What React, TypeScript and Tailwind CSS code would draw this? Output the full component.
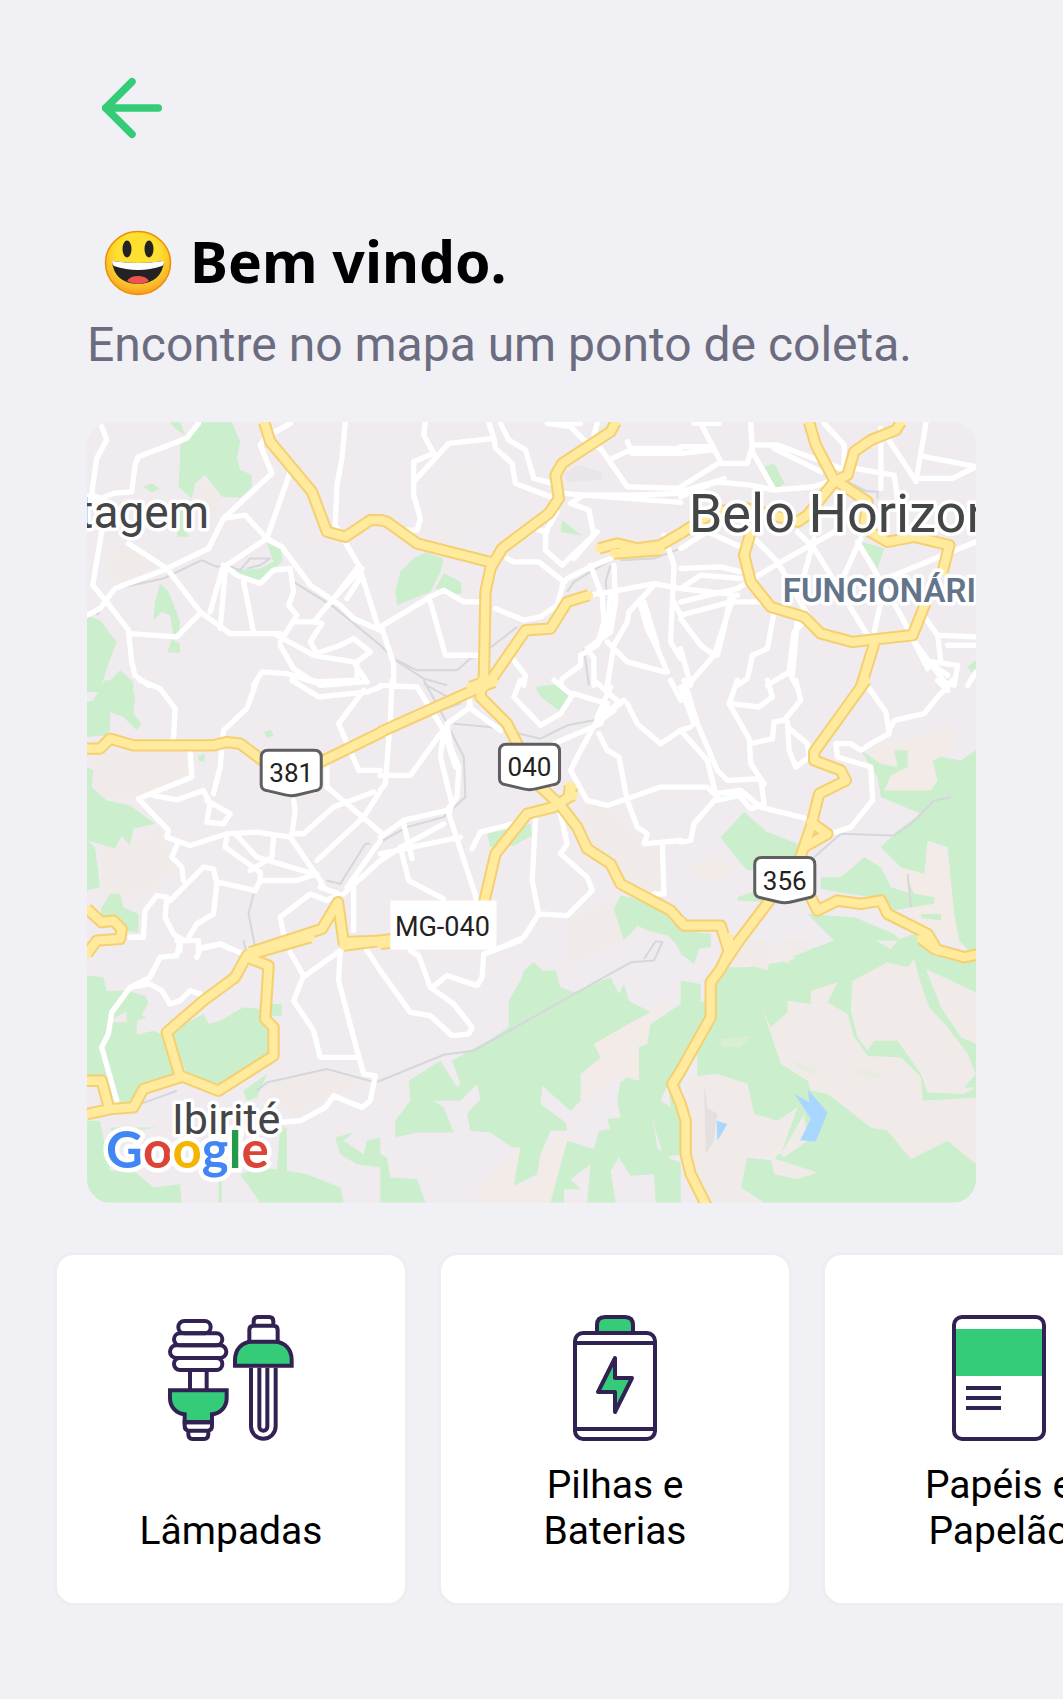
import { ArrowLeft } from "lucide-react";

type Shape = { fill: string; d: string };
type Tile = {
  x: number;
  y: number;
  land: Shape[];
  rails: string;
  streets: string;
  highways: string;
};

const GREEN = "#cbeecd";
const SAND = "#f0ebe9";
const CREAM = "#f2ebe7";
const WATER = "#a9d6ff";

// Each tile covers 300x265 map units; its paths are drawn on a grid three times as fine.
const tiles: Tile[] = [
  {
    x: -7,
    y: -7,
    land: [
      { fill: SAND, d: "M360 180 425 245 400 300 335 250ZM75 440 130 390 240 450 100 510Z" },
      {
        fill: GREEN,
        d: "M300 90 350 22 455 22 480 80 470 130 480 165 515 180 515 215 480 248 425 245 375 180 345 205 335 250 295 215 300 130ZM270 22 300 22 315 60 290 45ZM190 215 215 205 238 220 215 232ZM300 280 310 280 310 345 330 365 290 365ZM560 385 600 400 608 435 550 495 500 490 460 465 540 460 580 440ZM240 505 265 530 285 580 300 620 295 665 280 660 270 600 245 590 220 615 225 560ZM275 672 298 685 300 712 262 712ZM21 600 60 615 110 680 80 760 60 830 21 830ZM85 800 120 765 160 800 160 820 85 820Z",
      },
    ],
    rails: "M50 600 110 520 250 490 365 435 410 455 440 450 480 465 510 430 570 430 540 450 500 460M640 500 760 575 900 690",
    streets:
      "M65 35 80 75 50 130 40 200 35 240 65 250 100 235 155 230 165 150 175 125 320 70 355 25M35 240 60 270M65 350 38 510 80 560 145 645 155 740 165 780 205 810M21 600 60 580 105 520 250 465 385 400 430 310 575 175 540 90 560 65 630 25M145 385 260 460 360 590 450 655 600 655M150 655 290 665 355 600M430 310 495 300 560 370 630 170M440 450 560 370 605 395 690 510 780 570 820 610 900 645M390 590 430 450 470 480 540 505 580 465 630 460 640 530 625 570 650 600 600 680M420 640 435 470M490 500 520 650M640 620 700 620 760 550 845 460M795 22 785 130 770 210 765 330 835 450 895 640M700 620 725 625 690 680 710 715 780 690 820 670 870 710 830 740M590 660 700 720 820 740 860 800M600 690 640 760 700 800M520 810 545 770 620 775 700 800 830 795 830 750M760 550 830 460M800 550 845 480",
    highways: "M552 22 570 80 695 230 740 350 795 365 870 315 905 315",
  },
  {
    x: 293,
    y: -7,
    land: [
      { fill: "#e9e5e9", d: "M545 180 590 150 660 170 665 195 560 200Z" },
      { fill: "#f0ebec", d: "M180 190 290 130 320 250 280 350 180 380 130 350Z" },
      {
        fill: GREEN,
        d: "M100 430 135 412 190 430 180 470 150 530 50 570 45 530 60 470ZM190 475 240 500 245 535 200 540 165 520ZM545 315 605 362 540 350Z",
      },
    ],
    rails: "M0 690 40 730 110 765 230 765 270 730 300 720 410 635M560 530 580 500 690 435M45 735 130 790 200 810M720 435 820 430 900 400M690 450 675 500 680 540M610 700 625 810",
    streets:
      "M135 22 130 60 160 115 100 140 100 240 120 310 110 345 80 345M105 195 205 85 340 70 325 22M340 70 345 100 395 145 405 205 510 245M360 25 385 75 435 105 460 190 515 205M500 25 570 35 610 75 660 100 740 215 890 220M520 25 600 25M650 25 640 60M695 130 760 100 900 100M740 80 755 115 900 115M550 235 610 240 900 262M610 240 750 240 900 235M610 240 570 265 625 285 640 360 545 450 495 405 495 350 530 290M475 345 500 350M580 430 650 350M380 430 400 440 475 440 550 500 530 570 480 605 430 615 345 580M545 510 560 490 640 450 690 430M0 635 150 545 190 525 250 560 305 560M150 560 195 720 300 720M5 640 40 745 40 810M630 450 665 545 670 620 650 690 600 720 600 750 545 790 540 810M700 450 705 560 690 650 620 700 640 730 640 810M690 540 680 640 650 690M625 540 690 530 820 505 900 520M820 510 745 590 740 620 700 690 680 810M780 570 800 640 830 700 860 770M850 770 740 740 680 680M850 360 880 450 870 680 900 730M880 560 900 600M790 560 830 690M400 735 435 780 430 810",
    highways:
      "M0 315 20 320 110 385 325 440M705 22 690 50 545 145 525 180 535 250 505 295 365 400 330 460 315 530 310 815M625 540 560 560 510 640 435 645 335 790 270 815M655 400 710 385 770 400 840 390 900 355M700 415 840 405",
  },
  {
    x: 593,
    y: -7,
    land: [{ fill: GREEN, d: "M250 155 280 145 312 205 285 220ZM540 380 610 400 590 460ZM858 755 885 735 885 785Z" }],
    rails: "M520 225 590 230 590 250M480 190 560 230",
    streets:
      "M40 25 115 25M60 25 120 140 0 215M0 115 90 105M0 95 80 95M210 25 215 110 280 225M120 145 200 145 215 90 290 90 480 160M0 230 100 200 210 210 280 225 400 215 470 190M0 245 130 190M430 25 490 90 490 160M600 40 600 220M620 70 700 190 815 190 885 155 730 125M735 25 705 200M280 100 420 170M520 160 640 180 650 250M0 400 80 350 190 400M0 460 120 455 180 470M0 560 170 520 300 440 480 340M0 600 150 560 240 560M180 490 60 480 0 520M220 370 290 440 410 650M350 350 400 400 560 660M400 370 370 480M540 370 490 480M530 380 660 600 740 760M885 380 640 480 590 500M280 590 260 700 215 720 200 790 170 810M370 620 340 650 325 770 260 810M325 770 345 810M160 540 100 720 30 800M0 610 60 690 100 720M150 540 130 640 110 720M350 610 335 780M700 680 790 800 820 810 830 750 750 740M720 590 770 660 885 665M770 660 780 740M885 690 800 690M600 560 580 650M0 520 170 540M0 700 30 810M885 770 860 810M740 740 800 780",
    highways:
      "M385 22 405 90 460 195M660 22 645 45 570 75 520 110 500 180 460 200 380 300 350 320 200 280 100 290 0 355M470 200 560 260 550 340 620 380 700 365 805 390 785 470M210 350 190 420 210 500 270 575 370 605 420 655 515 680 695 660 735 560M580 685 540 815",
  },
  {
    x: -7,
    y: 258,
    land: [
      { fill: SAND, d: "M21 215 330 215 335 280 170 355 60 350 35 300ZM60 500 150 490 240 440 300 560 200 640 70 650Z" },
      {
        fill: GREEN,
        d: "M21 65 40 60 75 0 150 0 165 50 160 100 185 130 170 150 130 110 90 95 90 150 75 165 21 170ZM21 0 40 0 21 40ZM21 260 40 270 35 320 80 360 150 375 225 430 160 445 150 495 125 465 105 505 60 490 21 480ZM21 480 45 500 60 620 21 630ZM65 680 90 640 120 640 130 680 175 700 175 755 130 750 100 710 60 705ZM550 155 570 148 582 165 562 172ZM355 225 375 222 372 245 355 240Z",
      },
    ],
    rails: "M520 640 505 700 525 800M740 600 780 610 855 490 870 490",
    streets:
      "M180 0 240 25 285 85 280 180M530 0 500 85 430 150 420 260 400 340M330 215 335 290 175 355 265 450 260 470 330 495 440 460 530 455 630 470 720 600 730 620M220 345 290 358 370 330 390 370 380 425 430 430 450 400 380 360M640 360 645 390 635 460 670 460 760 380 880 335M740 250 740 320 900 455M635 0 715 50 860 35 900 20M700 0 720 15 850 5M850 30 775 130 835 270 900 270M710 540 850 410 895 340M800 620 900 480M790 640 900 540M820 620 820 750M290 495 275 530 305 560 310 600M440 465 435 500 540 575 540 600 650 600 710 580M470 465 530 530 700 580M580 470 575 530 510 570M270 660 370 560 400 565 410 610 400 700 350 730 320 780M415 605 525 630 540 600M150 770 190 770 195 690 230 645 260 650 255 710 280 760 310 780M610 760 600 710 690 640 740 660 775 640 720 620M290 780 355 780 355 810M300 780 300 810M370 800 420 790 450 805",
    highways:
      "M21 205 60 205 90 175 160 195 400 195 440 185 480 190 560 250M700 255 905 155M21 685 65 725 100 720 125 745 120 775 50 780 21 820M510 815 725 745 773 665 790 785 905 780",
  },
  {
    x: 293,
    y: 258,
    land: [
      { fill: SAND, d: "M600 370 680 385 760 450 840 500 840 640 720 610 690 550 620 505ZM560 720 700 650 730 780 560 860Z" },
      {
        fill: GREEN,
        d: "M465 20 530 12 575 45 535 90 480 50ZM320 460 450 430 455 465 400 495 330 500ZM720 645 790 660 900 720 900 800 860 765 800 750 770 735 730 780 700 685Z",
      },
    ],
    rails: "M130 0 190 110 250 230 255 350 190 410 80 440 0 485M220 130 330 140 480 175 560 135 640 120M150 100 240 70M130 10 220 60",
    streets:
      "M35 0 30 120 15 310 0 330M0 15 110 20 190 150 180 230 215 370 205 400 290 660M180 160 90 285 0 285M265 45 270 80 200 130 210 200 235 260 230 350 200 390 70 420 0 470M265 80 360 150M0 540 80 490 190 430M0 520 50 510 240 470M70 430 95 535M60 500 85 600 190 655M275 505 300 455 400 430 430 410M465 415 455 600 475 700 560 705 635 630 620 590 540 520 560 490 540 400M475 700 430 770 350 805M420 0 400 50 480 135 540 100 575 45 520 0M580 40 680 70 660 130 520 190M640 0 720 70 650 120 600 210 570 270 620 360 680 375 740 355 840 320 900 320M690 20 650 110 730 60M660 120 700 90M740 70 770 130 840 190 900 150M655 160 680 210 715 230 740 360 770 440 800 460 790 490 900 480M845 490 850 640 820 640M870 0 900 60M190 150 225 260",
    highways:
      "M0 155 290 25 340 5M305 0 300 50 380 130 420 210M475 315 540 375 590 440 620 505 690 550 720 610 870 690 905 730M575 320 565 350 520 380 440 400 345 520 310 670M568 315 565 350 580 345M0 780 40 775",
  },
  {
    x: 593,
    y: 258,
    land: [
      { fill: CREAM, d: "M560 190 700 180 800 140 830 200 760 250 760 330 600 340ZM650 560 740 480 830 560 830 780 700 730ZM20 560 110 530 170 570 70 600Z" },
      {
        fill: GREEN,
        d: "M190 395 260 455 350 490 340 560 200 570 165 530 120 470ZM170 650 230 630 260 665 170 660ZM540 210 600 250 650 260 640 210 680 210 680 260 630 285 610 330 750 330 770 300 755 240 780 230 840 240 885 210 885 835 835 780 820 700 800 500 740 480 730 580 660 560 600 500 650 450 720 400 600 350 590 290ZM420 590 480 590 550 530 600 560 630 620 690 640 680 600 700 640 760 650 760 670 690 680 640 690 580 650 500 640 420 625ZM380 700 520 710 640 760 700 830 330 830 460 780ZM0 750 90 760 90 800 0 810ZM720 700 780 700 780 720 720 712Z",
      },
    ],
    rails: "M400 530 480 460 640 465 690 430 760 360 810 350M680 580 690 680",
    streets:
      "M10 0 50 130 110 270 140 300 240 295 250 370 210 385 175 345 110 360 80 240 0 150M0 20 40 130M0 150 30 140M170 0 145 70 205 175 210 250 250 310M150 70 235 80 275 50 260 0M210 190 275 175 280 125 310 120 360 60 345 0M320 125 325 210 345 260 385 230 380 190 320 140M0 320 80 320 110 350 40 430 30 480 0 485M100 340 180 330 240 380 380 415M565 25 615 95 625 160 570 190 540 210 510 190 465 190 470 230 570 260 575 360 510 440 450 460M625 150 640 120 730 100 770 50 800 20 815 0M770 0 800 30",
    highways:
      "M555 0 400 215 400 240 480 270 495 300 415 340 390 440 355 540M390 425 440 460 370 500M385 640 410 690 470 660 540 670 600 660 620 700 740 760 770 810M270 655 160 800M0 720 10 735 120 735 145 815",
  },
  {
    x: -7,
    y: 518,
    land: [
      { fill: SAND, d: "M540 430 740 385 870 420 750 470 650 530 600 500Z" },
      {
        fill: GREEN,
        d: "M21 105 70 110 80 150 140 150 195 165 205 185 185 225 200 230 170 240 180 280 220 270 260 290 300 400 190 430 150 490 80 500 65 420 21 410ZM270 275 370 220 385 250 420 240 490 200 540 205 545 240 590 260 580 350 410 450 320 400ZM570 190 605 190 605 225 570 225ZM21 540 60 540 90 690 120 785 60 785 21 740ZM90 560 230 560 100 580ZM90 690 160 690 220 740 300 730 305 785 120 785ZM480 700 540 680 620 690 680 700 780 740 790 785 540 785ZM415 720 425 720 425 785 415 785ZM765 590 820 575 790 600 850 640 860 600 900 590 900 680 830 670 780 640ZM490 450 560 400 530 470 500 480ZM600 560 620 560 620 690 590 690Z",
      },
      { fill: SAND, d: "M85 245 140 210 140 245ZM170 245 190 280 170 280Z" },
    ],
    rails: "M490 0 500 40M530 450 560 425 740 385 885 425 900 420M180 490 290 450",
    streets:
      "M300 0 290 45 240 50 210 110 150 140 95 215 85 280 65 320 110 480M150 140 210 130 245 150 270 190 300 180 330 150 360 160M350 50 360 25 420 10 490 40M630 35 670 105 640 180 700 270 720 350 825 350M780 30 675 105M780 30 775 120 825 310 850 400 885 405 870 480 845 500 760 465 735 500 660 540 600 545M860 30 900 90",
    highways:
      "M690 -10 500 45 465 110 370 180 260 275 300 410 190 445 160 500 90 505 21 520M500 50 565 75 555 235 580 260 580 345 415 450 300 405M21 420 65 420 85 495M790 15 905 0",
  },
  {
    x: 293,
    y: 518,
    land: [
      { fill: CREAM, d: "M280 785 340 700 420 620 400 740 480 720 480 640 540 570 560 600 520 760 500 785ZM640 350 640 310 760 240 830 190 880 170 810 250 800 300 780 420 720 400 610 480 560 560 600 440Z" },
      {
        fill: GREEN,
        d: "M430 90 460 65 485 90 525 90 540 140 580 155 690 110 715 160 730 130 745 180 810 215 760 240 640 310 660 350 600 400 600 480 570 510 485 435 480 490 555 545 560 570 510 570 480 640 470 700 400 735 420 620 395 620 330 575 270 570 260 520 300 475 290 430 240 480 160 480 190 500 220 575 110 575 45 590 45 540 90 480 85 420 180 360 230 440 240 430 215 360 250 340 340 290 385 260 385 180 420 120ZM810 250 900 190 900 640 850 650 825 570 815 530 840 480 870 500 865 440 720 440 735 410 775 420 775 320 800 310ZM720 420 865 420 840 480 815 530 830 620 870 655 900 665 900 785 825 785 820 700 750 705 715 650 690 690 705 785 620 785 630 670 570 715 600 745 550 745 550 785 510 785 560 600 640 625 655 570 690 565 680 535 720 530 710 480ZM0 640 20 650 30 710 110 715 135 785 0 785ZM880 0 900 0 900 35Z",
      },
    ],
    rails: "M0 420 190 342 280 330 750 65 820 60 845 5 825 2 790 55",
    streets:
      "M0 90 90 215 150 225 215 285 265 280 275 260 220 190 150 140 115 45 90 30M155 140 200 105 290 135 305 110 310 40 420 0",
    highways: "M0 10 40 5",
  },
  {
    x: 593,
    y: 518,
    land: [
      {
        fill: GREEN,
        d: "M110 80 200 80 330 60 400 20 520 30 640 0 700 -20 885 60 885 785 250 785 180 740 200 650 280 660 300 620 350 500 290 540 220 520 200 430 110 400 50 410 50 330 0 430 0 200 80 180ZM0 0 60 10 40 70 0 40ZM0 120 60 130 60 200 0 220Z",
      },
      { fill: "#d8efd4", d: "M120 295 210 285 180 320 120 320Z" },
      {
        fill: SAND,
        d: "M515 120 620 65 680 80 700 55 720 130 745 200 800 260 860 340 885 400 850 440 885 440 850 460 740 455 720 400 650 300 580 300 560 330 530 290 510 210ZM245 205 270 260 320 215 320 180 390 190 390 150 470 125 440 185 500 220 520 290 560 345 660 350 720 410 725 480 885 470 885 670 800 600 690 655 620 570 570 560 440 460 390 450 380 420 300 370ZM735 85 885 155 885 310 840 290 780 200ZM270 650 410 695 350 715 280 700ZM300 640 370 520 380 600 310 650ZM140 80 190 0 260 0 330 70 270 50 260 90 200 70ZM300 0 400 0 380 30 330 50ZM585 0 650 0 630 25ZM20 410 100 400 200 430 220 520 290 540 350 500 300 640 200 640 170 740 240 785 80 785 20 600Z",
      },
      { fill: "#e4e0df", d: "M70 430 80 500 110 520 100 600 75 640Z" },
      { fill: "#e7ebe0", d: "M330 360 410 390 410 405 350 380ZM530 380 600 400 590 415 530 400Z" },
      { fill: WATER, d: "M342 460 385 485 382 448 440 515 405 602 358 598 390 535ZM108 540 140 550 110 600Z" },
    ],
    rails: "",
    streets: "",
    highways:
      "M145 -10 145 30 120 85 90 125 90 230 0 390 -25 430 0 490 15 540 15 640 30 700 80 800M175 0 125 75M720 -5 760 25 850 50 895 40",
  },
];

const place = (t: Tile) => `translate(${t.x} ${t.y}) scale(0.33333)`;

function Shield({ x, y, label }: { x: number; y: number; label: string }) {
  return (
    <g transform={`translate(${x} ${y})`}>
      <path
        d="M8 1H54Q61 1 61 8V35Q61 40 56 41L37 45.500Q31 47 25 45.500L6 41Q1 40 1 35V8Q1 1 8 1Z"
        fill="#fff"
        stroke="#5f5f61"
        strokeWidth="3"
      />
      <text x="31" y="33" textAnchor="middle" fontSize="26" fill="#222">
        {label}
      </text>
    </g>
  );
}

function CityMap() {
  return (
    <svg
      viewBox="0 0 888 780"
      role="img"
      aria-label="Mapa de pontos de coleta"
      className="block h-auto w-full rounded-[24px] bg-[#efebee] font-[Roboto,sans-serif]"
      fill="none"
      strokeLinejoin="round"
    >
      {tiles.map((t, i) => (
        <g key={i} transform={place(t)}>
          {t.land.map((s, j) => (
            <path key={j} d={s.d} fill={s.fill} />
          ))}
        </g>
      ))}
      {tiles.map((t, i) => (
        <path key={i} d={t.rails} transform={place(t)} stroke="#d5d7db" strokeWidth="6" />
      ))}
      {tiles.map((t, i) => (
        <path key={i} d={t.streets} transform={place(t)} stroke="#fff" strokeWidth="16" strokeLinecap="round" />
      ))}
      {tiles.map((t, i) => (
        <path key={i} d={t.highways} transform={place(t)} stroke="#f5d070" strokeWidth="37" />
      ))}
      {tiles.map((t, i) => (
        <path key={i} d={t.highways} transform={place(t)} stroke="#ffea9e" strokeWidth="25" strokeLinecap="round" />
      ))}

      <Shield x={173} y={327} label="381" />
      <Shield x={411} y={321} label="040" />
      <Shield x={666} y={434} label="356" />
      <rect x="303" y="478" width="106" height="49" fill="#fff" />
      <text x="355" y="513" textAnchor="middle" fontSize="27" fill="#222">
        MG-040
      </text>

      <g stroke="#fff" strokeWidth="7" paintOrder="stroke">
        <text x="122" y="106" textAnchor="end" fontSize="46" fill="#444547">
          Contagem
        </text>
        <text x="601" y="110" fontSize="54" fill="#444547">
          Belo Horizonte
        </text>
        <text x="695" y="180" fontSize="33" fontWeight="600" fill="#64748a">
          FUNCIONÁRIOS
        </text>
        <text x="85" y="711" fontSize="43" fill="#444547">
          Ibirité
        </text>
        <text x="19" y="745" fontSize="51" fontWeight="700" strokeWidth="9" className="font-[Lato,sans-serif]">
          <tspan fill="#4285f4">G</tspan>
          <tspan fill="#db4437">o</tspan>
          <tspan fill="#f4b400">o</tspan>
          <tspan fill="#4285f4">g</tspan>
          <tspan fill="#259b4a">l</tspan>
          <tspan fill="#db4437">e</tspan>
        </text>
      </g>
    </svg>
  );
}

function Smiley() {
  return (
    <svg viewBox="0 0 68 68" className="size-[68px] shrink-0" aria-hidden="true">
      <defs>
        <radialGradient id="face" cx="0.5" cy="0.35" r="0.65">
          <stop offset="0.5" stopColor="#fde030" />
          <stop offset="0.85" stopColor="#fbb92a" />
          <stop offset="1" stopColor="#f79a22" />
        </radialGradient>
      </defs>
      <ellipse cx="34" cy="34" rx="32.500" ry="31.500" fill="url(#face)" stroke="#eb8f00" strokeWidth="1.500" />
      <ellipse cx="23" cy="20" rx="4.500" ry="8.500" fill="#222" />
      <ellipse cx="45" cy="20" rx="4.500" ry="8.500" fill="#222" />
      <path d="M8 32Q34 36 60 32Q58 54 34 55Q10 54 8 32Z" fill="#222" />
      <path d="M8 32Q34 36 60 32Q60 36 58 37Q34 45 10 37Q8 35 8 32Z" fill="#fff" />
      <path d="M23 52Q26 47 34 47Q42 47 45 52Q40 55 34 55Q28 55 23 52Z" fill="#ef5350" />
    </svg>
  );
}

const INK = "#322153";
const LEAF = "#34cb79";

function LampIcon() {
  return (
    <svg viewBox="0 0 378 378" className="size-[126px]" fill="none" stroke={INK} strokeWidth="12" aria-hidden="true">
      <rect x="31" y="18" width="97" height="37" rx="18" />
      <rect x="18" y="55" width="145" height="36" rx="18" />
      <rect x="6" y="91" width="169" height="38" rx="19" />
      <rect x="18" y="129" width="145" height="36" rx="18" />
      <path d="M66 165V226M116 165V226" />
      <path d="M6 226H176V250C176 275 158 296 132 298V322H50V298C24 296 6 275 6 250Z" fill={LEAF} />
      <path d="M50 322H132V333Q132 345 121 347H61Q50 345 50 333ZM61 347H121V358Q121 372 108 372H74Q61 372 61 358Z" />
      <path d="M257 32V19Q257 6 270 6H303Q316 6 316 19V32M244 80V45Q244 32 257 32H316Q329 32 329 45V80" />
      <path d="M201 152V135C201 103 222 80 252 80H320C350 80 371 103 371 135V152Z" fill={LEAF} />
      <path d="M249 158V334A37 37 0 0 0 323 334V158" />
      <path d="M274 158V335A12 12 0 0 0 298 335V158" />
    </svg>
  );
}

function BatteryIcon() {
  return (
    <svg viewBox="0 0 126 126" className="size-[126px]" fill="none" stroke={INK} strokeWidth="4" aria-hidden="true">
      <path d="M45 18V10Q45 2 53 2H73Q81 2 81 10V18Z" fill={LEAF} />
      <rect x="23" y="18" width="80" height="106" rx="8" />
      <path d="M23 28H103M23 114H103" />
      <path d="M63 43V63H80L63 97V77H46Z" fill={LEAF} strokeLinejoin="round" />
    </svg>
  );
}

function PaperIcon() {
  return (
    <svg viewBox="0 0 126 126" className="size-[126px]" fill="none" stroke={INK} strokeWidth="4" aria-hidden="true">
      <path d="M18 14H108V61H18Z" fill={LEAF} stroke="none" />
      <rect x="18" y="2" width="90" height="122" rx="8" />
      <path d="M30 73H65M30 83H65M30 93H65" />
    </svg>
  );
}

const items = [
  { label: "Lâmpadas", Icon: LampIcon },
  { label: "Pilhas e Baterias", Icon: BatteryIcon },
  { label: "Papéis e Papelão", Icon: PaperIcon },
];

export default function App() {
  return (
    <main className="min-h-screen bg-[#f0f0f5] pt-[63px] pb-20 font-[Roboto,sans-serif] text-black">
      <div className="px-[87px]">
        <button type="button" aria-label="Voltar" className="block cursor-pointer text-[#34cb79]">
          <ArrowLeft size={90} strokeWidth={2} />
        </button>
        <h1 className="mt-[74px] flex h-[72px] items-center gap-[18px] pl-[17px] font-['Noto_Sans',sans-serif] text-[57px] leading-[68px] font-bold">
          <Smiley />
          <span className="pb-1">Bem vindo.</span>
        </h1>
        <p className="mt-[18px] text-[48px] leading-[56px] text-[#6c6c80]">Encontre no mapa um ponto de coleta.</p>
        <div className="mt-[49px]">
          <CityMap />
        </div>
      </div>
      <div className="mt-[49px] flex gap-[30px] overflow-x-auto px-[54px] [scrollbar-width:none]">
        {items.map(({ label, Icon }) => (
          <button
            key={label}
            type="button"
            className="flex h-[354px] w-[354px] shrink-0 cursor-pointer flex-col items-center justify-between rounded-[20px] border-[3px] border-[#eeeef0] bg-white px-12 pt-[60px] pb-[49px] text-[39px] leading-[46px]"
          >
            <Icon />
            <span className="text-center">{label}</span>
          </button>
        ))}
      </div>
    </main>
  );
}
